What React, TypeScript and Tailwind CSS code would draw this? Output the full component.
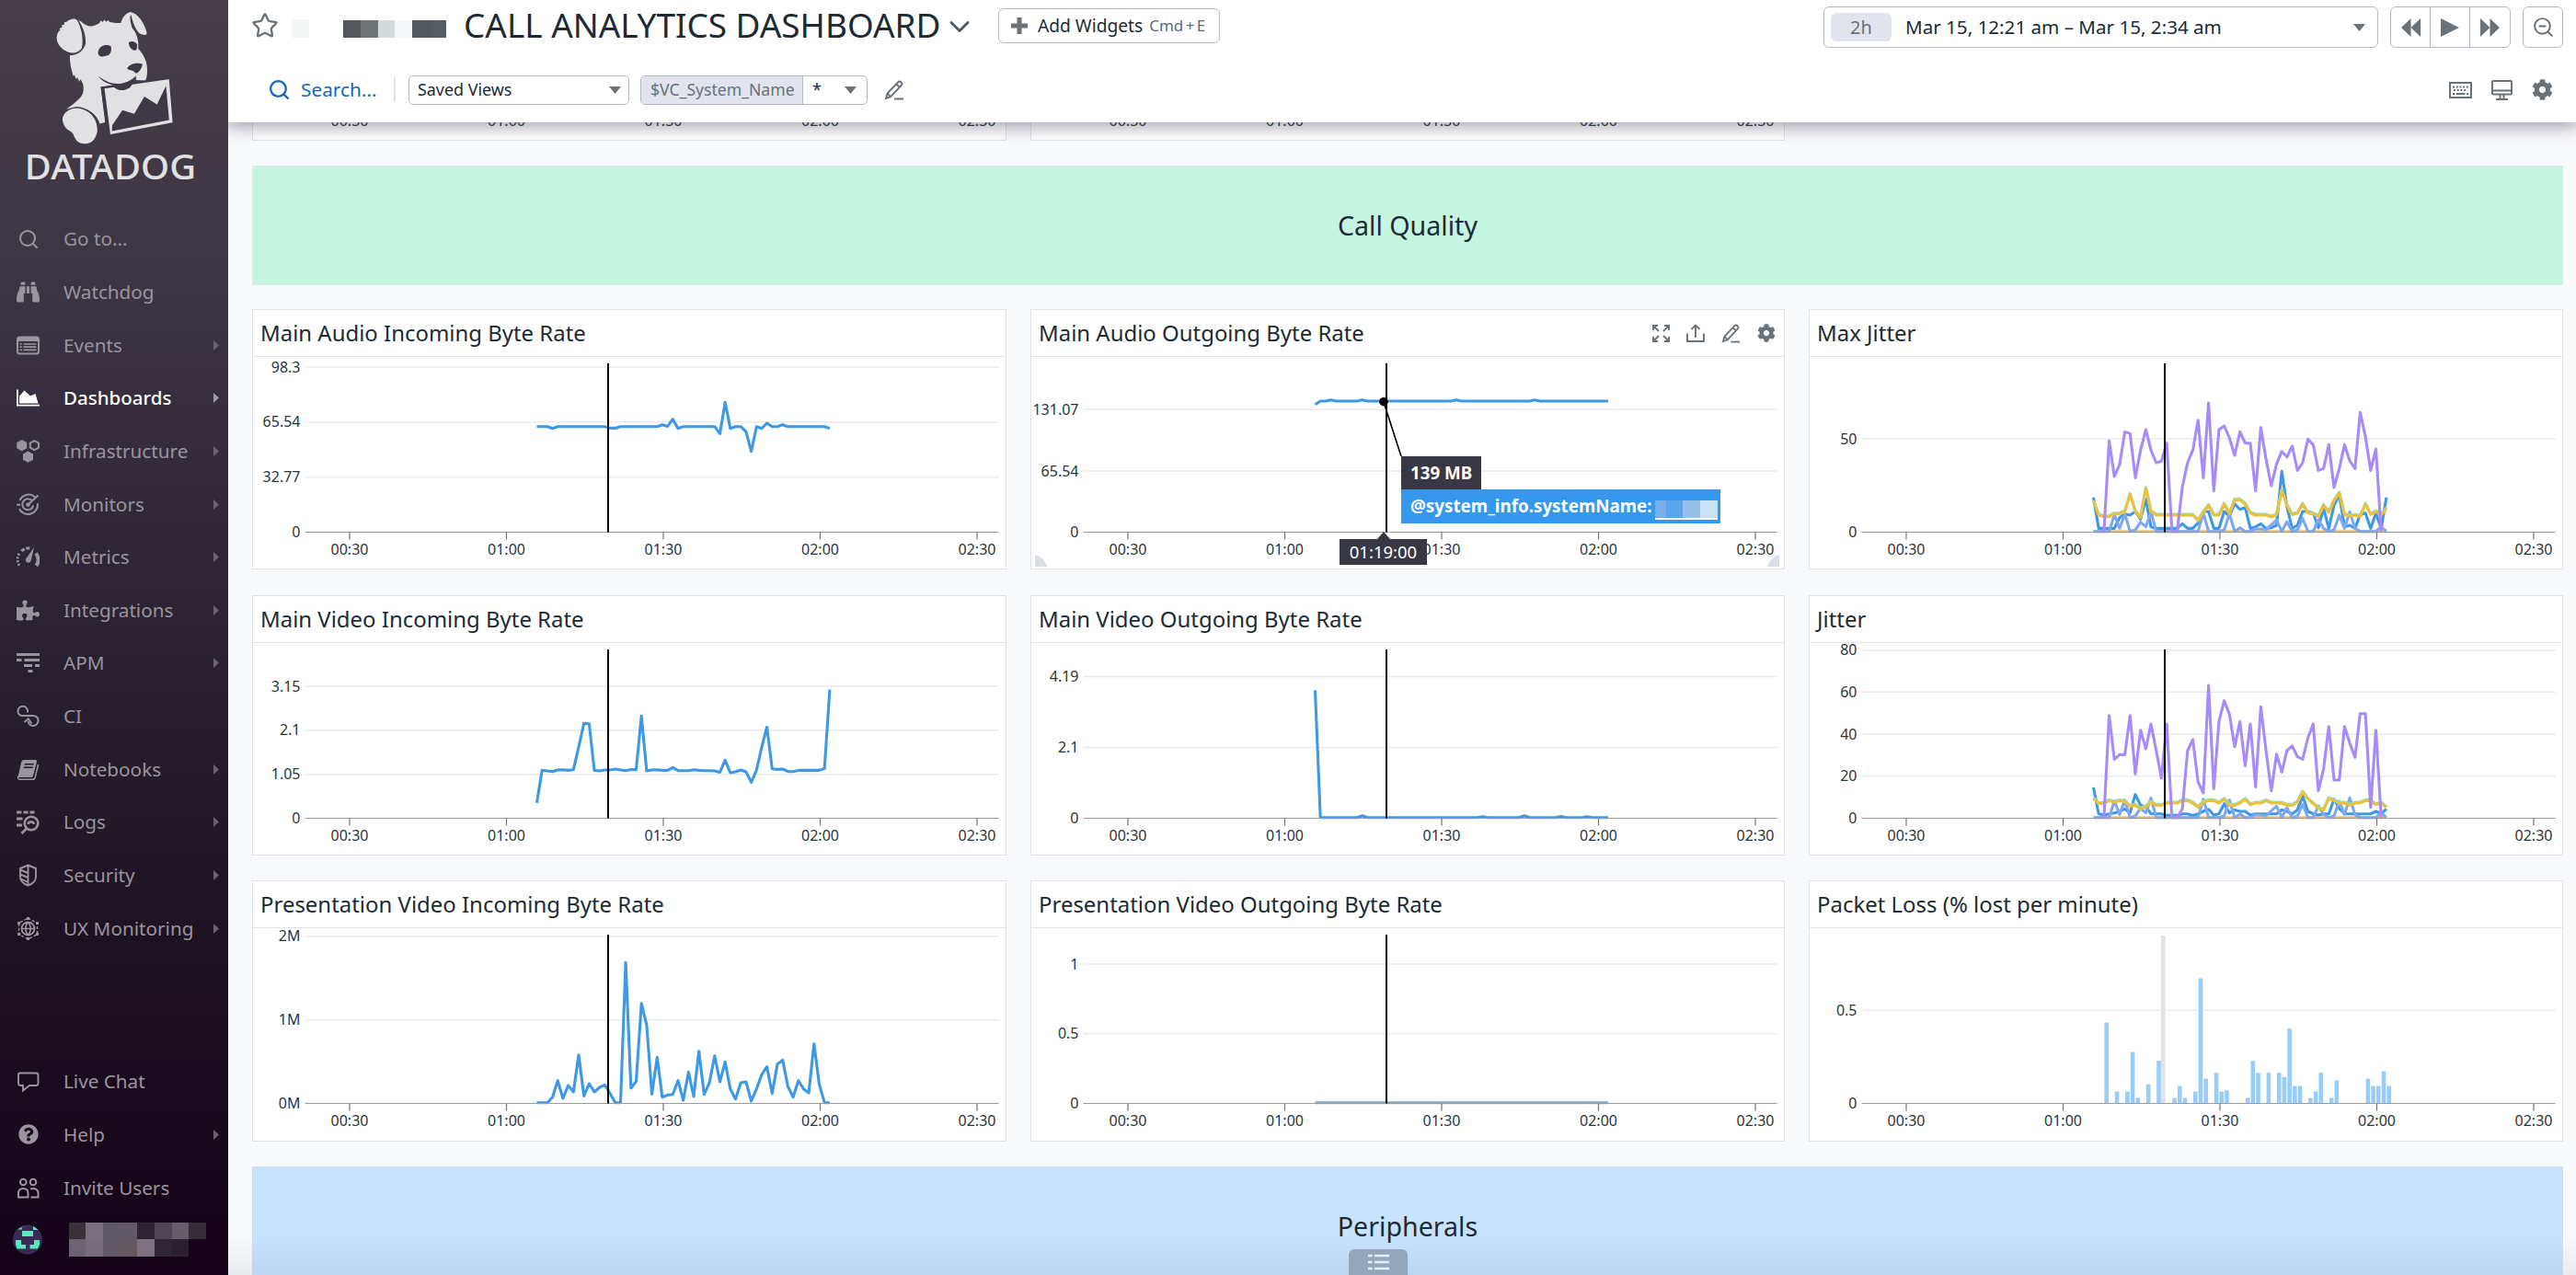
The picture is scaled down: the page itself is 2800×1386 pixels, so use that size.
import React from "react";
import { Search, Star, ChevronDown, ZoomOut } from "lucide-react";
import { FaBinoculars, FaCog, FaPuzzlePiece, FaQuestionCircle } from "react-icons/fa";

/* ------------------------------------------------------------------ */
/* Sidebar                                                              */
/* ------------------------------------------------------------------ */

function DatadogLogo() {
  return (
    <svg className="h-[205px] w-[248px] shrink-0" viewBox="0 0 738 459" preserveAspectRatio="none">
      <g fill="#e1e1e4">
        <path d="M262 52 C285 68 300 66 322 56 L326 50 L332 54 L338 48 L343 53 L350 49 L355 54 L375 56 L391 56 C396 42 406 32 422 29 C445 32 468 56 475 80 C474 88 462 85 452 82 C440 74 430 58 424 36 C418 40 422 56 428 69 C442 80 450 100 447 118 C462 130 476 148 476 168 C477 182 474 192 470 196 L440 195 L441 186 C430 202 412 210 398 209 L326 211 L340 298 L323 301 C312 278 286 262 246 260 L215 266 C228 258 258 244 268 228 C272 215 270 204 264 197 L259 193 L257 199 L250 188 L247 193 L240 182 L237 186 C230 168 225 150 226 135 C250 134 272 124 277 105 C278 85 268 64 254 50Z" />
        <path d="M184 96 C182 84 190 74 195 74 L192 70 L201 66 L200 61 L208 60 L208 54 L214 54 C226 46 244 43 250 50 C262 66 272 94 264 118 C252 130 232 132 214 124 C198 118 186 108 184 96Z" />
        <path d="M246 263 C285 264 316 286 315 318 C312 336 298 350 275 350 C250 349 244 340 236 325 C222 314 208 315 202 292 C202 276 222 264 246 263Z" />
        <path d="M335 213 L549 190 L561 300 L355 330Z" stroke="#403946" strokeWidth="5" />
      </g>
      <g fill="#3f3845">
        <path d="M363 305 L396 268 L434 277 L467 235 L508 254 L537 209 L547 292 L362 319Z" />
        <path d="M317 128 C320 110 345 106 359 113 C362 122 358 131 350 135 C336 137 320 142 317 128Z" />
        <path d="M416 104 C422 98 438 100 444 108 L442 121 C430 126 418 116 416 104Z" />
        <path d="M411 167 C420 154 446 152 461 156 C458 168 448 179 438 178 C432 170 420 173 411 167Z" />
        <path d="M317 184 C350 206 400 214 440 184 L438 190 C428 204 428 207 420 213 C400 222 385 222 368 212 L330 215 L352 322 L342 300 L326 212 L368 207 C345 204 326 195 317 184Z" />
      </g>
      <text x="80" y="436" fill="#e1e1e4" fontSize="85" fontWeight="500" fontFamily="Noto Sans, sans-serif" textLength="554" lengthAdjust="spacingAndGlyphs">
        DATADOG
      </text>
    </svg>
  );
}

const line = { fill: "none", stroke: "currentColor", strokeWidth: 2 };

const icons: Record<string, React.ReactNode> = {
  search: <Search size={24} strokeWidth={2} />,
  watchdog: <FaBinoculars size={25} />,
  events: (
    <svg width="25" height="25" viewBox="0 0 25 25">
      <rect x="1" y="3.5" width="23" height="18" rx="2.5" {...line} />
      <path d="M1 4h23v4H1z" fill="currentColor" />
      <path d="M7.5 11h14M7.5 14.2h14M7.5 17.4h14M3.5 11h2.2M3.5 14.2h2.2M3.5 17.4h2.2" {...line} strokeWidth={1.7} />
    </svg>
  ),
  dashboards: (
    <svg width="25" height="25" viewBox="0 0 25 25">
      <path d="M.9 3.500V20.700H25" {...line} strokeWidth={1.8} />
      <path d="M3 18.500V10.500L8.500 4.500L15 10.500L20.500 8L23.500 18.500Z" fill="currentColor" />
    </svg>
  ),
  infrastructure: (
    <svg width="25" height="25" viewBox="0 0 25 25">
      <path d="M5.700 0L11.200 3V9.300L5.700 12.300L.2 9.300V3ZM12.500 12.500L18 15.500V21.800L12.500 24.800L7 21.800V15.500Z" fill="currentColor" />
      <path d="M19.400 1.200L24 3.700V8.700L19.400 11.200L14.800 8.700V3.700Z" {...line} />
    </svg>
  ),
  monitors: (
    <svg width="25" height="25" viewBox="0 0 25 25">
      <path d="M20 4.200A10.500 10.500 0 0 0 3.500 8M22.800 11A10.500 10.500 0 0 1 3 17.200M17 8.500A6 6 0 1 0 18.200 13.500M12.500 12.500L23.500 2.500M0 12.800H4" {...line} />
      <circle cx="12.500" cy="12.600" r="2.300" fill="currentColor" />
    </svg>
  ),
  metrics: (
    <svg width="25" height="25" viewBox="0 0 25 25">
      <path d="M3 21.500A11 11 0 0 1 3.500 8" {...line} strokeWidth={3} strokeDasharray="2 1.800" />
      <path d="M5.500 6A11 11 0 0 1 15 3" {...line} strokeWidth={3} strokeDasharray="4 1.500" />
      <path d="M21 8.500A11 11 0 0 1 21.500 22" {...line} strokeWidth={4} />
      <path d="M19 2L15.800 16A3 3 0 1 1 10.800 13.500Z" fill="currentColor" />
    </svg>
  ),
  integrations: <FaPuzzlePiece size={25} />,
  apm: (
    <svg width="25" height="25" viewBox="0 0 25 25">
      <path d="M0 3.500H25M0 9.500H5.500M8.500 9.500H25M8 15.500H17M20 15.500H25M12.500 21.500H17.500" {...line} strokeWidth={2.800} />
    </svg>
  ),
  ci: (
    <svg width="25" height="25" viewBox="0 0 25 25">
      <path d="M12 8.500C12.500 4.500 10 1.800 6.800 1.800C3.500 1.800 1.500 4.300 1.500 7.200C1.500 10.200 3.800 12 6.500 12H17.500C21.500 12 23.500 14.500 23.500 17.500C23.500 20.500 21 23 18 23C15 23 12.700 21 12.700 18" {...line} strokeWidth={2} />
      <path d="M8.500 19L12.800 15.500L16.500 20.500" {...line} />
    </svg>
  ),
  notebooks: (
    <svg width="25" height="25" viewBox="0 0 25 25">
      <path fillRule="evenodd" d="M8 2H20.500C21.800 2 22.300 3 22 4L18 19.500C17.700 20.500 17 21 16 21H1.500L5 5C5.500 3 6.300 2 8 2ZM9 6L8.500 7.500H18.500L19 6ZM8 9.500L7.500 11H17.500L18 9.500Z" fill="currentColor" />
      <path d="M1.800 19.500C1 22 2 23.300 4 23.300H17.500C19 23.300 19.800 22.500 20.200 21L23.600 7" {...line} strokeWidth={1.600} />
    </svg>
  ),
  logs: (
    <svg width="25" height="26" viewBox="0 0 25 26">
      <path d="M0 2H5.500M7.500 2H12.500M14.500 2H19.500M0 9H6.500M0 16H6" {...line} strokeWidth={3} />
      <circle cx="16" cy="14" r="7.300" {...line} strokeWidth={2.600} />
      <path d="M11 19.500L5.500 25M12.500 14.800C13.500 11.500 18 11.500 19 14.800" {...line} strokeWidth={2.800} />
    </svg>
  ),
  security: (
    <svg width="25" height="25" viewBox="0 0 25 25">
      <path d="M12.500 1.500L21 5V14C21 19 17 22 12.500 23.500C8 22 4 19 4 14V5ZM12.500 1.500V23.500M4 6.500L12.500 10M4 11.500L12.500 15M5 16.500L12.500 20" {...line} strokeWidth={1.900} />
    </svg>
  ),
  ux: (
    <svg width="25" height="25" viewBox="0 0 25 25">
      <circle cx="12.500" cy="12.500" r="7" {...line} strokeWidth={1.800} />
      <path d="M5.500 12.500H19.500M12.500 5.500C9 9 9 16 12.500 19.500M12.500 5.500C16 9 16 16 12.500 19.500" {...line} strokeWidth={1.600} />
      <path d="M12.500 1L22.500 6.500V18.500L12.500 24L2.500 18.500V6.500Z" {...line} strokeWidth={1.400} strokeDasharray="3 2" />
      <path d="M11 0h3v3h-3zM11 22h3v3h-3zM1.200 5h3v3h-3zM21 5h3v3h-3zM1.200 17h3v3h-3zM21 17h3v3h-3z" fill="currentColor" />
    </svg>
  ),
  chat: (
    <svg width="25" height="25" viewBox="0 0 25 25">
      <path d="M3.500 3.500H21C22.500 3.500 23.500 4.500 23.500 6V14.500C23.500 16 22.500 17 21 17H14L7 22.500V17H4.500C3 17 2 16 2 14.500V5C2 4 2.500 3.500 3.500 3.500Z" {...line} strokeWidth={1.900} />
    </svg>
  ),
  help: <FaQuestionCircle size={22} />,
  users: (
    <svg width="25" height="25" viewBox="0 0 25 25">
      <circle cx="7.300" cy="6" r="3.300" {...line} />
      <circle cx="18" cy="6" r="3.300" {...line} />
      <path d="M2 22.500V18C2 15 4 13 7.300 13S12.500 15 12.500 18V22.500ZM15 13.500C19.500 12 23.500 14 23.500 18V22.500H15.500" {...line} />
    </svg>
  ),
};

type NavEntry = { icon: string; label: string; arrow?: boolean; active?: boolean };

const mainNav: NavEntry[] = [
  { icon: "search", label: "Go to..." },
  { icon: "watchdog", label: "Watchdog" },
  { icon: "events", label: "Events", arrow: true },
  { icon: "dashboards", label: "Dashboards", arrow: true, active: true },
  { icon: "infrastructure", label: "Infrastructure", arrow: true },
  { icon: "monitors", label: "Monitors", arrow: true },
  { icon: "metrics", label: "Metrics", arrow: true },
  { icon: "integrations", label: "Integrations", arrow: true },
  { icon: "apm", label: "APM", arrow: true },
  { icon: "ci", label: "CI" },
  { icon: "notebooks", label: "Notebooks", arrow: true },
  { icon: "logs", label: "Logs", arrow: true },
  { icon: "security", label: "Security", arrow: true },
  { icon: "ux", label: "UX Monitoring", arrow: true },
];

const footNav: NavEntry[] = [
  { icon: "chat", label: "Live Chat" },
  { icon: "help", label: "Help", arrow: true },
  { icon: "users", label: "Invite Users" },
];

function NavItem({ icon, label, arrow, active }: NavEntry) {
  return (
    <div className={`flex h-[57.650px] items-center pl-[18px] pr-[10px] ${active ? "text-white" : "text-[#9a949d]"}`}>
      <span className="flex w-[25px] justify-center">{icons[icon]}</span>
      <span className={`ml-[26px] whitespace-nowrap ${active ? "text-[20.500px] font-medium" : "text-[20.700px]"}`}>{label}</span>
      {arrow && (
        <svg className="ml-auto" width="6" height="11" viewBox="0 0 6 11">
          <path d="M0 0L6 5.500L0 11Z" fill={active ? "#a09aa4" : "#6a6270"} />
        </svg>
      )}
    </div>
  );
}

const maskTop = ["bg-[#383138]", "bg-[#7a6f7e]", "bg-[#5f5865]", "bg-[#615a66]", "bg-[#2c2230]", "bg-[#4f4654]", "bg-[#665c6a]", "bg-[#362d39]"];
const maskBottom = ["bg-[#6b6370]", "bg-[#766c7a]", "bg-[#625967]", "bg-[#63585f]", "bg-[#7d7080]", "bg-[#2f2634]", "bg-[#2a2030]", "bg-transparent"];

function Sidebar() {
  return (
    <aside className="flex h-full w-[248px] shrink-0 flex-col bg-[linear-gradient(180deg,#463f49_0%,#3d3643_20%,#342b3b_36%,#2a2231_50%,#221826_65%,#1b0f20_78%,#150319_100%)]">
      <DatadogLogo />
      <nav className="mt-[26px] flex flex-col">
        {mainNav.map((n) => (
          <NavItem key={n.label} {...n} />
        ))}
      </nav>
      <nav className="mt-[109px] flex flex-col">
        {footNav.map((n) => (
          <NavItem key={n.label} {...n} />
        ))}
      </nav>
      <div className="mt-[9px] flex items-center pl-[14px]">
        <svg width="32" height="33" viewBox="0 0 32 33">
          <circle cx="16" cy="16.500" r="16" fill="#392b55" />
          <path d="M5 5.500H10L9.500 3.500L12 1.500L5 5.500ZM22 2L27 5.500V6H22ZM10 7H22V13H10ZM3 17H9V22H14V26.500H4.500L3 22ZM23 17H29V22L27 26.500H18.500V22H23Z" fill="#5ce8bc" />
        </svg>
        <div className="ml-[29px] grid grid-cols-[18px_19px_19px_18px_19px_19px_18px_19px] grid-rows-[18px_19px]">
          {[...maskTop, ...maskBottom].map((c, i) => (
            <span key={i} className={c} />
          ))}
        </div>
      </div>
    </aside>
  );
}

/* ------------------------------------------------------------------ */
/* Header                                                               */
/* ------------------------------------------------------------------ */

function Caret({ className = "" }: { className?: string }) {
  return (
    <svg className={className} width="13" height="8" viewBox="0 0 13 8">
      <path d="M0 0H13L6.500 8Z" fill="#6a7278" />
    </svg>
  );
}

function Pencil({ size }: { size: number }) {
  return (
    <svg width={size} height={size} viewBox="0 0 22 22" fill="none" stroke="#6a7278" strokeWidth="1.900">
      <path d="M2 20L3.500 14.500L15 2.500C16 1.500 17.500 1.500 18.500 2.500S19.500 5 18.500 6L7 18.200ZM13.500 4.500L17 8M3.500 14.500L7 18M11 20.500H21" />
    </svg>
  );
}

function Header() {
  return (
    <header className="relative z-10 flex h-[133px] shrink-0 flex-col bg-white shadow-[0_4px_16px_2px_rgba(60,55,80,0.42)]">
      <div className="flex h-[57px] items-center pl-[25px] pr-[14px]">
        <Star size={30} strokeWidth={1.900} className="mb-[2px] text-[#6a7278]" />
        <span className="ml-[14px] mt-[5px] h-[20px] w-[19px] bg-[#f4f5f5]" />
        <div className="ml-[37px] mt-[5px] flex h-[19px]">
          <span className="w-[19px] bg-[#53575b]" />
          <span className="w-[19px] bg-[#6f7477]" />
          <span className="w-[18px] bg-[#d4dbdb]" />
          <span className="w-[19px] bg-[#f5f8fa]" />
          <span className="w-[19px] bg-[#53585d]" />
          <span className="w-[18px] bg-[#545b63]" />
        </div>
        <h1 className="mb-[2px] ml-[19px] w-[521px] whitespace-nowrap text-[36.900px] leading-none text-[#1c2b34]">CALL ANALYTICS DASHBOARD</h1>
        <ChevronDown size={36} strokeWidth={1.900} className="w-[36px] text-[#4f5a62]" />
        <div className="ml-[24px] mb-[1px] flex h-[38px] w-[241px] items-center rounded-[6px] border border-[#b4b9c4] pl-[13px]">
          <svg width="18" height="18" viewBox="0 0 18 18">
            <path d="M6.500 0h5v6.500H18v5h-6.500V18h-5v-6.500H0v-5h6.500z" fill="#6a7278" />
          </svg>
          <span className="ml-[11px] text-[19.200px] text-[#1c2b34]">Add Widgets</span>
          <span className="ml-[7px] whitespace-nowrap text-[17px] text-[#5f6970] [word-spacing:-2px]">Cmd + E</span>
        </div>
        <div className="ml-auto mt-[2px] flex h-[45px] w-[603px] items-center rounded-[6px] border border-[#b4b9c4] px-[7px]">
          <span className="flex h-[31px] w-[66px] items-center justify-center rounded-[6px] bg-[#e1e4ed] text-[20px] text-[#6a7278]">2h</span>
          <span className="ml-[15px] whitespace-nowrap text-[20.600px] text-[#1c2b34]">Mar 15, 12:21 am – Mar 15, 2:34 am</span>
          <Caret className="ml-auto mr-[6px]" />
        </div>
        <div className="ml-[13px] mt-[2px] grid h-[45px] w-[131px] grid-cols-3 divide-x divide-[#b4b9c4] rounded-[6px] border border-[#b4b9c4] text-[#6a7278]">
          <span className="flex items-center justify-center">
            <svg width="21" height="20" viewBox="0 0 21 20"><path d="M10.500 0V20L0 10ZM21 0V20L10.500 10Z" fill="currentColor" /></svg>
          </span>
          <span className="flex items-center justify-center">
            <svg width="20" height="20" viewBox="0 0 20 20"><path d="M0 0L20 10L0 20Z" fill="currentColor" /></svg>
          </span>
          <span className="flex items-center justify-center">
            <svg width="21" height="20" viewBox="0 0 21 20"><path d="M0 0V20L10.500 10ZM10.500 0V20L21 10Z" fill="currentColor" /></svg>
          </span>
        </div>
        <span className="ml-[13px] mt-[2px] flex h-[45px] w-[44px] items-center justify-center rounded-[6px] border border-[#b4b9c4] text-[#6a7278]">
          <ZoomOut size={25} strokeWidth={1.900} />
        </span>
      </div>
      <div className="mt-[24px] flex h-[33px] items-center pl-[43px] pr-[25px]">
        <Search size={25} strokeWidth={2.200} className="text-[#1069b8]" />
        <span className="ml-[11px] w-[84px] text-[20.800px] text-[#1069b8]">Search...</span>
        <span className="ml-[17px] h-[27px] w-[2px] bg-[#dfe1e8]" />
        <div className="ml-[14px] flex h-[32px] w-[240px] items-center rounded-[5px] border border-[#b4b9c4] pl-[9px] pr-[8px] text-[17.900px] text-[#1c2b34]">
          Saved Views
          <Caret className="ml-auto" />
        </div>
        <div className="ml-[12px] flex h-[32px] w-[247px] items-center overflow-hidden rounded-[5px] border border-[#b4b9c4] text-[18px]">
          <span className="flex h-full w-[176px] items-center border-r border-[#b4b9c4] bg-[#e1e4ed] pl-[10px] text-[17.600px] text-[#6a7278]">$VC_System_Name</span>
          <span className="ml-[10px] text-[#1c2b34]">*</span>
          <Caret className="ml-auto mr-[11px]" />
        </div>
        <span className="ml-[18px]"><Pencil size={22} /></span>
        <div className="ml-auto flex items-center gap-[21px] text-[#6a7278]">
          <svg width="25" height="18" viewBox="0 0 25 18">
            <rect x="1" y="1" width="23" height="16" fill="none" stroke="currentColor" strokeWidth="2" />
            <path d="M4 5.500H21M5 9H20M4 13H6M19 13H21" stroke="currentColor" strokeWidth="1.900" strokeDasharray="2 1.700" />
            <path d="M8 13H17.500" stroke="currentColor" strokeWidth="2" />
          </svg>
          <svg width="23" height="22" viewBox="0 0 23 22">
            <rect x="1" y="1" width="21" height="14.500" rx="1" fill="none" stroke="currentColor" strokeWidth="2" />
            <path d="M1 11.500H22M9.500 16V20M13.500 16V20M5 21H18" stroke="currentColor" strokeWidth="2" />
          </svg>
          <FaCog size={23} />
        </div>
      </div>
    </header>
  );
}

/* ------------------------------------------------------------------ */
/* Charts                                                               */
/* ------------------------------------------------------------------ */

const BASE = 242.500;
const STEP = 5.685;
const FIRST_X = 309.500;
const CURSOR_X = 387;
const hours: [string, number][] = [["00:30", 106], ["01:00", 276.500], ["01:30", 447], ["02:00", 617.500], ["02:30", 788]];

/* Samples are one per minute from 01:06, three steps to a pixel of height. */
const pointX = (i: number) => FIRST_X + i * STEP;
const toPoints = (samples: number[], start: number) =>
  samples.map((s, i) => `${pointX(i + start).toFixed(1)},${(BASE - 0.800 - s / 3).toFixed(1)}`).join(" ");

type Series = { color: string; samples: number[]; start?: number };
type ChartSpec = {
  title: string;
  grid: [string, number][];
  series?: Series[];
  bars?: [number, number][];
  hovered?: boolean;
};

const BLUE = "#3d99e5";

const periwinkle = [0, 0, 0, 0, 55, 10, 57, 0, 5, 30, 15, 64, 0, 0, 0, 0, 0, 0, 0, 0, 0, 60, 0, 0, 0, 5, 57, 0, 12, 0, 0, 8, 8, 5, 22, 37, 0, 32, 0, 5, 42, 0, 0, 38, 10, 0, 5, 53, 10, 64, 10, 0, 0, 0, 0, 15, 0];
const maxYellow = [98, 53, 48, 48, 57, 57, 65, 121, 65, 45, 141, 65, 53, 53, 53, 53, 53, 53, 53, 53, 35, 62, 85, 53, 53, 89, 57, 103, 103, 89, 60, 53, 53, 53, 47, 55, 133, 85, 55, 60, 89, 60, 57, 48, 85, 62, 100, 125, 55, 50, 53, 48, 89, 55, 65, 53, 75];
const yellow = [62, 45, 47, 55, 50, 55, 52, 37, 40, 28, 35, 50, 40, 40, 47, 47, 47, 55, 55, 47, 33, 50, 55, 55, 47, 60, 40, 40, 47, 60, 42, 47, 47, 55, 48, 47, 47, 40, 40, 50, 83, 60, 45, 30, 25, 62, 55, 47, 47, 40, 47, 47, 55, 55, 42, 47, 33];
const flat = Array.from({ length: 57 }, () => 0);

const rows: { height: string; charts: ChartSpec[] }[] = [
  {
    height: "h-[283px]",
    charts: [
      {
        title: "Main Audio Incoming Byte Rate",
        grid: [["98.3", 63], ["65.54", 122.700], ["32.77", 182.700], ["0", BASE]],
        series: [{ color: BLUE, samples: [342, 342, 342, 336, 342, 342, 342, 342, 342, 342, 342, 342, 342, 342, 337, 337, 342, 342, 342, 342, 342, 342, 342, 342, 348, 343, 366, 336, 342, 342, 342, 342, 342, 342, 342, 319, 421, 336, 342, 342, 325, 261, 342, 336, 353, 342, 342, 348, 342, 342, 342, 342, 342, 342, 342, 342, 336] }],
      },
      {
        title: "Main Audio Outgoing Byte Rate",
        grid: [["131.07", 109.300], ["65.54", 176], ["0", BASE]],
        hovered: true,
        series: [{ color: BLUE, samples: flat.map((_, i) => (i === 0 ? 414 : [3, 9, 27, 42].includes(i) ? 429 : 425)) }],
      },
      {
        title: "Max Jitter",
        grid: [["50", 141], ["0", BASE]],
        series: [
          { color: "#e8c07a", samples: flat },
          { color: "#3d99e5", samples: [111, 10, 10, 10, 10, 45, 57, 53, 65, 40, 105, 15, 10, 10, 10, 10, 10, 25, 10, 10, 28, 65, 65, 10, 10, 65, 50, 90, 72, 78, 10, 15, 25, 10, 12, 20, 196, 80, 10, 20, 65, 65, 60, 12, 75, 10, 85, 120, 15, 20, 10, 55, 60, 10, 60, 10, 111] },
          { color: "#7fa8f0", samples: periwinkle },
          { color: "#7fe6cf", samples: maxYellow.map((v) => v + 3) },
          { color: "#efc13a", samples: maxYellow },
          { color: "#a78bfa", start: 2, samples: [0, 295, 179, 218, 325, 319, 175, 265, 332, 265, 224, 229, 288, 0, 0, 145, 224, 265, 363, 175, 419, 132, 332, 344, 305, 248, 325, 288, 288, 132, 339, 235, 149, 220, 261, 243, 278, 199, 224, 301, 283, 199, 205, 283, 143, 205, 283, 230, 205, 388, 310, 199, 269, 0] },
        ],
      },
    ],
  },
  {
    height: "h-[283px]",
    charts: [
      {
        title: "Main Video Incoming Byte Rate",
        grid: [["3.15", 99], ["2.1", 146.700], ["1.05", 194.700], ["0", BASE]],
        series: [{ color: BLUE, samples: [48, 154, 152, 150, 155, 156, 154, 156, 230, 307, 306, 154, 152, 155, 155, 158, 155, 153, 157, 156, 331, 152, 155, 156, 154, 154, 163, 153, 153, 153, 156, 154, 153, 153, 152, 148, 187, 146, 149, 155, 149, 115, 155, 230, 295, 159, 157, 158, 150, 150, 154, 154, 154, 154, 154, 160, 417] }],
      },
      {
        title: "Main Video Outgoing Byte Rate",
        grid: [["4.19", 88.500], ["2.1", 165.500], ["0", BASE]],
        series: [{ color: BLUE, samples: flat.map((_, i) => (({ 0: 415, 9: 6, 32: 3, 40: 6, 47: 4, 52: 3 }) as Record<number, number>)[i] ?? 0) }],
      },
      {
        title: "Jitter",
        grid: [["80", 59.700], ["60", 105.300], ["40", 151.300], ["20", 196.700], ["0", BASE]],
        series: [
          { color: "#e8c07a", samples: flat },
          { color: "#3d99e5", samples: [98, 12, 8, 12, 15, 20, 28, 15, 75, 40, 35, 12, 12, 12, 7, 7, 7, 12, 12, 7, 12, 20, 27, 8, 12, 45, 15, 25, 20, 20, 8, 12, 12, 12, 12, 12, 25, 20, 12, 25, 70, 20, 12, 8, 12, 12, 60, 30, 12, 12, 12, 12, 12, 12, 20, 12, 28] },
          { color: "#7fa8f0", samples: periwinkle },
          { color: "#7fe6cf", samples: yellow.map((v) => v + 3) },
          { color: "#efc13a", samples: yellow },
          { color: "#a78bfa", start: 2, samples: [0, 333, 190, 205, 205, 333, 142, 285, 224, 305, 218, 128, 305, 0, 0, 28, 218, 254, 116, 80, 431, 94, 313, 381, 337, 231, 313, 169, 305, 100, 361, 218, 87, 207, 148, 218, 233, 198, 190, 260, 305, 87, 158, 297, 122, 122, 297, 243, 196, 339, 339, 33, 285, 0] },
        ],
      },
    ],
  },
  {
    height: "h-[284px]",
    charts: [
      {
        title: "Presentation Video Incoming Byte Rate",
        grid: [["2M", 60.700], ["1M", 151.700], ["0M", BASE]],
        series: [{ color: BLUE, samples: [0, 0, 0, 18, 72, 14, 56, 35, 156, 22, 62, 35, 50, 58, 30, 0, 0, 457, 47, 70, 324, 253, 28, 148, 18, 25, 27, 72, 8, 100, 20, 168, 27, 65, 153, 68, 133, 45, 12, 65, 68, 5, 45, 92, 117, 30, 126, 139, 53, 18, 72, 45, 32, 192, 60, 0, 0] }],
      },
      {
        title: "Presentation Video Outgoing Byte Rate",
        grid: [["1", 91], ["0.5", 166.700], ["0", BASE]],
        series: [{ color: "#7ba8cc", samples: flat }],
      },
      {
        title: "Packet Loss (% lost per minute)",
        grid: [["0.5", 141.300], ["0", BASE]],
        bars: [[2, 264], [4, 39], [6, 39], [7, 168], [8, 18], [10, 62], [12, 139], [15, 18], [16, 57], [17, 18], [19, 39], [20, 408], [21, 81], [23, 100], [24, 39], [25, 43], [29, 18], [30, 139], [31, 100], [33, 100], [35, 100], [36, 86], [37, 244], [38, 57], [39, 57], [41, 18], [42, 39], [43, 100], [45, 18], [46, 75], [52, 81], [53, 57], [54, 57], [55, 105], [56, 57]],
      },
    ],
  },
];

function Chart({ spec }: { spec: ChartSpec }) {
  return (
    <svg className="block" width="818" height="229" viewBox="1 52 818 229" fontFamily="Noto Sans, sans-serif" fontSize="16" fill="#2a363d">
      {spec.grid.map(([label, y]) => (
        <g key={label}>
          {y !== BASE && <path d={`M57.500 ${y}H811.500`} stroke="#e9eaed" strokeWidth="1.500" />}
          <text x="52.500" y={y + 5.600} textAnchor="end">{label}</text>
        </g>
      ))}
      {spec.bars && <rect x={pointX(13) - 0.300} y="60" width="4.600" height={BASE - 60} fill="#e1e2ea" />}
      {spec.bars?.map(([i, h]) => (
        <rect key={i} x={pointX(i) + 0.500} y={BASE - h / 3} width="4.600" height={h / 3} fill="#99cdf9" />
      ))}
      {spec.series?.map((s, i) => (
        <polyline key={i} points={toPoints(s.samples, s.start ?? 0)} fill="none" stroke={s.color} strokeWidth="3.100" strokeLinejoin="round" />
      ))}
      <path d={`M57.500 ${BASE}H811.500`} stroke="#9b9b9b" strokeWidth="1" />
      {hours.map(([label, x]) => (
        <g key={label}>
          <path d={`M${x} ${BASE}v8`} stroke="#70767a" strokeWidth="1.200" />
          <text x={x} y="266.600" textAnchor="middle">{label}</text>
        </g>
      ))}
      {!spec.bars && <path d={`M${CURSOR_X} 59V${BASE}`} stroke="#000" strokeWidth="2" />}
      {spec.hovered && (
        <g>
          <path d="M384 101L403 160" stroke="#000" strokeWidth="1.600" />
          <circle cx="384" cy="100.700" r="4.800" fill="#000" />
          <path d="M384 242L391 250H377Z" fill="#383844" />
          <path d="M5 267V280H18.500C16 274 11 268 5 267ZM814 267V280H800.500C803 274 808 268 814 267Z" fill="#dcdee5" />
        </g>
      )}
    </svg>
  );
}

function HoverTip() {
  return (
    <>
      <div className="absolute left-[402px] top-[159px] flex flex-col items-start whitespace-nowrap text-[18.800px] font-bold text-white">
        <span className="flex h-[36px] w-[87px] items-center bg-[#383844] pl-[10px]">139 MB</span>
        <span className="flex h-[37px] w-[347px] items-center bg-[#3598ec] pl-[10px]">
          <span className="w-[266px]">@system_info.systemName:</span>
          <span className="mt-[7px] flex h-[21px] border-b-2 border-white">
            <span className="w-[12px] bg-[#77afea]" />
            <span className="w-[18px] bg-[#5ba5ea]" />
            <span className="w-[19px] bg-[#97bfe8]" />
            <span className="w-[19px] bg-[#c8e4f3]" />
          </span>
        </span>
      </div>
      <span className="absolute left-[335px] top-[249px] flex h-[28px] w-[95px] items-center justify-center bg-[#383844] text-[18.500px] text-white">01:19:00</span>
    </>
  );
}

function CardTools() {
  return (
    <div className="ml-auto flex items-center gap-[18px] pr-[9px] text-[#6a7278]">
      <svg width="19" height="19" viewBox="0 0 19 19" fill="none" stroke="currentColor" strokeWidth="1.900">
        <path d="M1 6V1H6M1 1L7 7M13 1H18V6M18 1L12 7M1 13V18H6M1 18L7 12M18 13V18H13M18 18L12 12" />
      </svg>
      <svg width="20" height="20" viewBox="0 0 20 20" fill="none" stroke="currentColor" strokeWidth="1.900">
        <path d="M1 10.500V19H19V10.500M10 15V1.500M5.500 6L10 1.500L14.500 6" />
      </svg>
      <Pencil size={21} />
      <FaCog size={20} />
    </div>
  );
}

function Card({ spec, height }: { spec: ChartSpec; height: string }) {
  return (
    <section className={`relative flex w-[820px] flex-col border border-[#e1e3e9] bg-white ${height}`}>
      <div className="flex h-[51px] shrink-0 items-center border-b border-[#e1e3e9] pl-[8px]">
        <h2 className="whitespace-nowrap text-[23.950px] leading-none text-[#1c2b34]">{spec.title}</h2>
        {spec.hovered && <CardTools />}
      </div>
      <Chart spec={spec} />
      {spec.hovered && <HoverTip />}
    </section>
  );
}

function CroppedCard() {
  return (
    <div className="h-[20px] w-[820px] border-x border-b border-[#e1e3e9] bg-white">
      <svg className="block" width="818" height="19" viewBox="1 0 818 19" fontFamily="Noto Sans, sans-serif" fontSize="16" fill="#2a363d">
        {hours.map(([label, x]) => (
          <text key={label} x={x} y="3.600" textAnchor="middle">{label}</text>
        ))}
      </svg>
    </div>
  );
}

export default function App() {
  return (
    <div className="flex h-[1386px] w-[2800px] overflow-hidden bg-[#f9fafc] font-['Noto_Sans',sans-serif]">
      <Sidebar />
      <div className="relative flex min-w-0 flex-1 flex-col overflow-hidden">
        <Header />
        <main className="flex flex-col pl-[26px]">
          <div className="flex gap-[26px]">
            <CroppedCard />
            <CroppedCard />
          </div>
          <div className="mt-[27px] flex h-[130px] w-[2512px] items-center justify-center border border-[#d5ede4] bg-[#c5f4e1] text-[28.600px] text-[#1c2b34]">Call Quality</div>
          <div className="mt-[26px] flex flex-col gap-[27.500px]">
            {rows.map((row, i) => (
              <div key={i} className="flex gap-[26px]">
                {row.charts.map((c) => (
                  <Card key={c.title} spec={c} height={row.height} />
                ))}
              </div>
            ))}
          </div>
          <div className="mt-[27px] flex h-[130px] w-[2512px] shrink-0 items-center justify-center border border-[#cfdfef] bg-[#c8e3ff] text-[28.600px] text-[#1c2b34]">Peripherals</div>
        </main>
        <div className="absolute bottom-0 left-0 h-[46px] w-full bg-gradient-to-b from-transparent to-[#50607018]" />
        <div className="absolute bottom-0 left-[1218px] flex h-[28px] w-[64px] items-center justify-center rounded-t-[6px] bg-[#93a7bc]">
          <svg width="23" height="18" viewBox="0 0 23 18">
            <path d="M0 2H4.500M7 2H23M0 9H4.500M7 9H23M0 16H4.500M7 16H23" stroke="#e3eefa" strokeWidth="2.600" />
          </svg>
        </div>
      </div>
    </div>
  );
}
